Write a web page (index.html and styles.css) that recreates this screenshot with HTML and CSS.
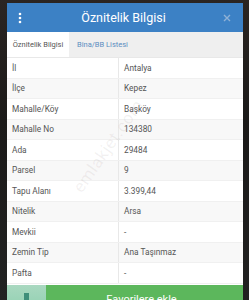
FILE: index.html
```html
<!DOCTYPE html>
<html>
<head>
<meta charset="utf-8">
<link rel="stylesheet" href="styles.css">
</head>
<body>
<div class="backdrop">
  <div class="modal">
    <div class="header">
      <svg class="menu" width="4" height="12" viewBox="0 0 4 12"><circle cx="2" cy="2" r="1.3" fill="#fff"/><circle cx="2" cy="6" r="1.3" fill="#fff"/><circle cx="2" cy="10" r="1.3" fill="#fff"/></svg>
      <div class="title">Öznitelik Bilgisi</div>
      <svg class="close" width="8" height="8" viewBox="0 0 8 8"><path d="M1 1L7 7M7 1L1 7" stroke="#8fb1d6" stroke-width="1.4"/></svg>
    </div>
    <div class="tabs">
      <div class="tab active">Öznitelik Bilgisi</div>
      <div class="tab">Bina/BB Listesi</div>
    </div>
    <div class="table">
      <div class="row"><div class="k">İl</div><div class="v">Antalya</div></div>
      <div class="row"><div class="k">İlçe</div><div class="v">Kepez</div></div>
      <div class="row"><div class="k">Mahalle/Köy</div><div class="v">Başköy</div></div>
      <div class="row"><div class="k">Mahalle No</div><div class="v">134380</div></div>
      <div class="row"><div class="k">Ada</div><div class="v">29484</div></div>
      <div class="row"><div class="k">Parsel</div><div class="v">9</div></div>
      <div class="row"><div class="k">Tapu Alanı</div><div class="v">3.399,44</div></div>
      <div class="row"><div class="k">Nitelik</div><div class="v">Arsa</div></div>
      <div class="row"><div class="k">Mevkii</div><div class="v">-</div></div>
      <div class="row"><div class="k">Zemin Tip</div><div class="v">Ana Taşınmaz</div></div>
      <div class="row"><div class="k">Pafta</div><div class="v">-</div></div>
      <div class="watermark">emlakjet.com</div>
    </div>
    <div class="footer">
      <div class="thumb"><div class="tower t1"></div><div class="tower t2"></div><div class="tower t3"></div></div>
      <div class="fav">Favorilere ekle</div>
    </div>
  </div>
</div>
</body>
</html>
```
FILE: styles.css
```css
html, body {
  margin: 0;
  padding: 0;
  height: 300px;
  overflow: hidden;
}
body {
  background: #1e1c1b;
  font-family: Roboto, "Noto Sans", sans-serif;
}
.backdrop {
  height: 300px;
  background: linear-gradient(180deg, #2b2522 0%, #1b1a19 40%, #222 100%);
  padding-top: 3px;
  box-sizing: border-box;
}
.modal {
  margin-left: 7px;
  width: 236px;
  background: #fff;
}
.header {
  height: 29px;
  background: #3c81c5;
  display: flex;
  align-items: center;
  padding: 0 12px 0 11px;
}
.menu { flex: none; }
.title {
  flex: 1;
  text-align: center;
  color: #fff;
  font-size: 12.5px;
  padding-left: 2px;
}
.close { flex: none; }
.tabs {
  height: 25px;
  background: #efefef;
  display: flex;
  border-bottom: 1px solid #e8e8e8;
}
.tab {
  font-size: 7.5px;
  color: #5b8dc0;
  display: flex;
  align-items: center;
  padding: 0 8px;
}
.tab.active {
  background: #fff;
  color: #555;
  width: 54px;
  justify-content: center;
  padding: 0 4px;
}
.table {
  position: relative;
  overflow: hidden;
}
.row {
  display: flex;
  height: 20.5px;
  border-bottom: 1px solid #f0f0f0;
  box-sizing: border-box;
  font-size: 8.3px;
  color: #555;
}
.row:nth-child(even) { background: #f8f8f8; }
.k {
  width: 112px;
  flex: none;
  border-right: 1px solid #e8e8e8;
  padding-left: 5px;
  display: flex;
  align-items: center;
  box-sizing: border-box;
}
.v {
  padding-left: 5px;
  display: flex;
  align-items: center;
}
.watermark {
  position: absolute;
  left: 78px;
  top: 118px;
  font-size: 17px;
  color: rgba(120, 100, 100, 0.09);
  transform: rotate(-55deg);
  transform-origin: left bottom;
  letter-spacing: 0.5px;
}
.footer {
  display: flex;
  height: 30px;
  background: #5cb75c;
  margin-top: 1px;
}
.thumb {
  width: 39px;
  flex: none;
  background: linear-gradient(180deg, #a9d8c0, #8ccfae);
  display: flex;
  align-items: flex-end;
  justify-content: center;
  gap: 2px;
}
.tower { background: #3f8f7a; width: 5px; }
.t1 { height: 14px; background: #5aa48e; }
.t2 { height: 22px; }
.t3 { height: 12px; background: #4c9a80; }
.fav {
  flex: 1;
  color: #fff;
  font-size: 11px;
  text-align: center;
  padding-top: 8px;
  padding-right: 6px;
}
```
